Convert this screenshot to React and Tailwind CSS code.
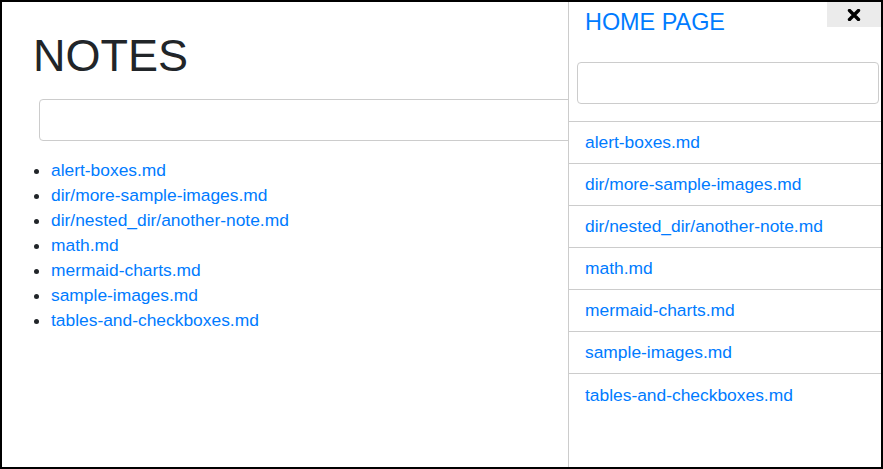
import React from 'react';

const notes = [
  'alert-boxes.md',
  'dir/more-sample-images.md',
  'dir/nested_dir/another-note.md',
  'math.md',
  'mermaid-charts.md',
  'sample-images.md',
  'tables-and-checkboxes.md',
];

const font = { fontFamily: '"Liberation Sans", Arial, sans-serif' };

const App = () => {
  return (
    <div
      className="relative w-[883px] h-[469px] border-2 border-black bg-white overflow-hidden"
      style={font}
    >
      {/* Main notes list */}
      <div className="pt-[26px]">
        <h1 className="ml-[31px] text-[45px] leading-[56px] text-[#212529] font-normal">NOTES</h1>
        <input
          type="text"
          className="block mt-[15px] ml-[37px] w-[640px] h-[42px] border border-[#ccc] rounded-[4px] outline-none"
        />
        <ul className="mt-[17px] ml-[9px] pl-[40px] list-disc text-[17.4px] leading-[25px] text-[#212529]">
          {notes.map((n) => (
            <li key={n}>
              <a href="#" className="text-[#007bff]">{n}</a>
            </li>
          ))}
        </ul>
      </div>

      {/* Sidebar overlay */}
      <div className="absolute top-0 right-0 bottom-0 w-[313px] bg-white border-l border-[#ccc]">
        <div className="flex items-start">
          <a href="#" className="mt-[7px] ml-[16px] text-[23.4px] leading-[26px] text-[#007bff]">HOME PAGE</a>
          <button className="ml-auto w-[54px] h-[25px] bg-[#ebebeb] flex items-center justify-center">
            <svg width="14" height="12" viewBox="0 0 14 12">
              <path d="M2.5 1.5 L11.5 10.5 M11.5 1.5 L2.5 10.5" stroke="#000" strokeWidth="3.4" strokeLinecap="round" />
            </svg>
          </button>
        </div>
        <input
          type="text"
          className="block mt-[27px] ml-[8px] w-[302px] h-[42px] border border-[#ccc] rounded-[4px] outline-none"
        />
        <ul className="mt-[17px] border-t border-[#ccc]">
          {notes.map((n, i) => (
            <li
              key={n}
              className={`h-[42px] flex items-center pl-[16px] text-[17.4px] ${i < notes.length - 1 ? 'border-b border-[#ccc]' : ''}`}
            >
              <a href="#" className="text-[#007bff]">{n}</a>
            </li>
          ))}
        </ul>
      </div>
    </div>
  );
};

export default App;
